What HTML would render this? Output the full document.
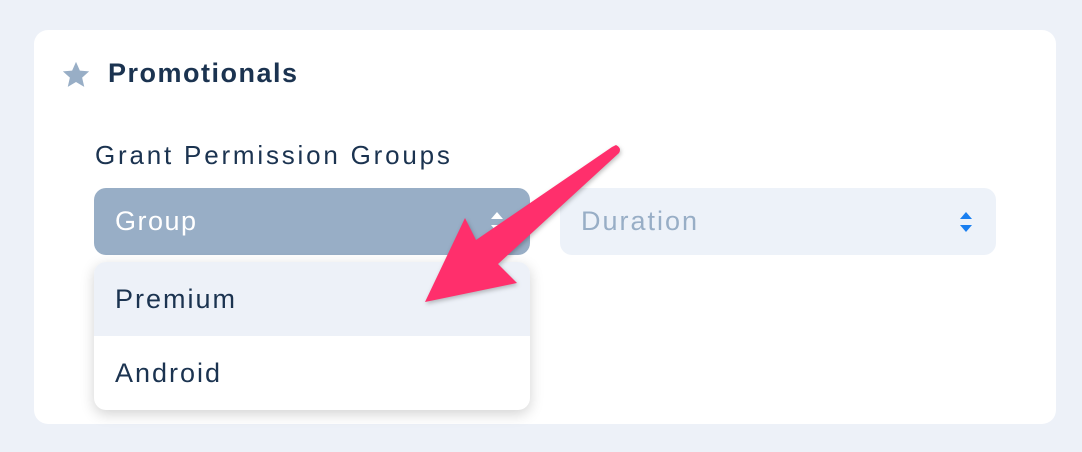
<!DOCTYPE html>
<html><head><style>
body{margin:0;width:1082px;height:452px;background:#edf1f8;font-family:"Liberation Sans",sans-serif;position:relative;overflow:hidden}
.card{position:absolute;left:34px;top:30px;width:1022px;height:394px;background:#fff;border-radius:14px}
.t{position:absolute;left:108px;top:58px;font-size:27px;letter-spacing:1.5px;font-weight:bold;color:#1b3350}
.l{position:absolute;left:95px;top:140px;font-size:26px;letter-spacing:2.8px;color:#1b3350}
.sel{position:absolute;top:188px;width:436px;height:67px;border-radius:12px;font-size:27px;letter-spacing:1.5px;line-height:67px;box-sizing:border-box;padding-left:21px}
.dd{position:absolute;left:94px;top:262px;width:436px;height:148px;background:#fff;border-radius:12px;box-shadow:0 4px 14px rgba(0,0,0,.18);overflow:hidden}
.dd div{height:74px;line-height:74px;padding-left:21px;font-size:27px;letter-spacing:2px;color:#1b3350}
</style></head><body>
<div class="card"></div>
<svg style="position:absolute;left:60px;top:60px" width="32" height="30" viewBox="0 0 24 24"><path d="M12 1.5l3.1 7 7.4.6-5.6 5 1.7 7.4L12 17.6l-6.6 3.9 1.7-7.4-5.6-5 7.4-.6z" fill="#98aec6"/></svg>
<div class="t">Promotionals</div>
<div class="l">Grant Permission Groups</div>
<div class="sel" style="left:94px;background:#98aec6;color:#fff">Group
<svg style="position:absolute;right:26px;top:23px" width="14" height="22" viewBox="0 0 14 22"><path d="M7 1l6 7H1zM7 21l6-7H1z" fill="#fff"/></svg></div>
<div class="sel" style="left:560px;background:#edf2f9;color:#98aec6;letter-spacing:2px">Duration
<svg style="position:absolute;right:23px;top:23px" width="14" height="22" viewBox="0 0 14 22"><path d="M7 1l6 7H1zM7 21l6-7H1z" fill="#1a7ff0"/></svg></div>
<div class="dd"><div style="background:#edf1f8">Premium</div><div>Android</div></div>
<svg style="position:absolute;left:0;top:0" width="1082" height="452"><g style="filter:drop-shadow(1px 2px 2px rgba(0,0,0,.25))"><path d="M616 145 Q622 148 619 153 L498 264 L517 283 L425 302 L465 218 L476 240 L612 147 Z" fill="#ff2f6c"/></g></svg>
</body></html>
